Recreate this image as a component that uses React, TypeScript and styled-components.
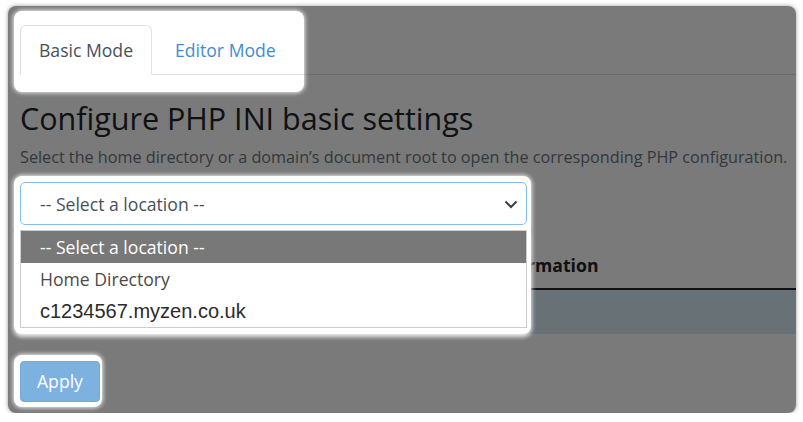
import styled, { createGlobalStyle, css } from "styled-components";

const GlobalStyle = createGlobalStyle`
  body {
    margin: 0;
    background: #fff;
    font-family: "Open Sans", "DejaVu Sans", sans-serif;
  }
  * { box-sizing: border-box; }
`;

type Pad = [number, number, number, number];

const options = [
  { label: "-- Select a location --", active: true },
  { label: "Home Directory" },
  { label: "c1234567.myzen.co.uk", arial: true },
];

export default function App() {
  return (
    <Page>
      <GlobalStyle />
      <Frame>
        <Content>
          <TabRow>
            <Spot $pad={[14, 0, 17, 6]}>
              <TabList>
                <Tab $active>Basic Mode</Tab>
                <Tab>Editor Mode</Tab>
              </TabList>
            </Spot>
            <TabFiller />
          </TabRow>

          <Title>Configure PHP INI basic settings</Title>
          <Lead>
            Select the home directory or a domain’s document root to open the corresponding PHP
            configuration.
          </Lead>

          <Spot $pad={[6, 4, 5, 6]} $radius='8px 8px 0 0'>
            <SelectBox>
              <span>-- Select a location --</span>
              <svg width='14' height='10' viewBox='0 0 14 10' fill='none'>
                <path d='M1.5 2.5 7 8l5.5-5.5' stroke='#3b3f44' strokeWidth='2' />
              </svg>
            </SelectBox>
            <Menu>
              <MenuList>
                {options.map((o) => (
                  <Option key={o.label} $active={o.active} $arial={o.arial}>
                    {o.label}
                  </Option>
                ))}
              </MenuList>
            </Menu>
          </Spot>

          <Table>
            <thead>
              <tr>
                <Th $width={462} />
                <Th>Information</Th>
              </tr>
            </thead>
            <tbody>
              <tr>
                <Td $first>&nbsp;</Td>
                <Td>&nbsp;</Td>
              </tr>
            </tbody>
          </Table>

          <ActionRow>
            <Spot $pad={[6, 2, 5, 6]}>
              <ApplyButton type='button'>Apply</ApplyButton>
            </Spot>
          </ActionRow>
        </Content>
        <Overlay />
      </Frame>
    </Page>
  );
}

/*
=========== STYLES =================
*/
const Page = styled.div`
  padding: 6px 0 0 8px;
`;

const Frame = styled.div`
  position: relative;
  width: 788px;
  height: 407px;
  overflow: hidden;
  border-radius: 8px;
  background: #fff;
  box-shadow: 0 0 4px rgba(0, 0, 0, 0.4);
`;

const Overlay = styled.div`
  position: absolute;
  inset: 0;
  z-index: 1;
  background: rgba(0, 0, 0, 0.522);
`;

const Content = styled.div`
  padding: 19px 0 0 12px;
`;

const Spot = styled.div<{ $pad: Pad; $radius?: string }>`
  position: relative;
  z-index: 2;
  background: #fff;
  border-radius: ${(p) => p.$radius ?? "8px"};
  box-shadow: 0 0 4px 1px rgba(255, 255, 255, 0.85);
  width: fit-content;
  ${({ $pad: [t, r, b, l] }) => css`
    padding: ${t}px ${r}px ${b}px ${l}px;
    margin: ${-t}px ${-r}px ${-b}px ${-l}px;
  `}
`;

const TabRow = styled.div`
  display: flex;
`;

const TabList = styled.div`
  display: flex;
  gap: 4px;
  padding-right: 9px;
  border-bottom: 1px solid #dee2e6;
`;

const TabFiller = styled.div`
  flex: 1;
  border-bottom: 1px solid #dee2e6;
`;

const Tab = styled.div<{ $active?: boolean }>`
  margin-bottom: -1px;
  padding: 11px 18px;
  font-size: 17.6px;
  line-height: 26.4px;
  border: 1px solid transparent;
  border-radius: 6px 6px 0 0;
  color: #3d8dd4;

  ${(p) =>
    p.$active &&
    css`
      color: #495057;
      background: #fff;
      border-color: #dee2e6 #dee2e6 #fff;
    `}
`;

const Title = styled.h1`
  margin: 26px 0 0;
  font-size: 30.5px;
  font-weight: 400;
  line-height: 34px;
  color: #212529;
`;

const Lead = styled.p`
  margin: 10px 0 13px;
  font-size: 16.2px;
  line-height: 24px;
  color: #6c757d;
`;

const SelectBox = styled.div`
  display: flex;
  align-items: center;
  justify-content: space-between;
  width: 507px;
  height: 43px;
  padding: 0 8px 0 19px;
  border: 1px solid #86bdf0;
  border-radius: 5px;
  background: #fff;
  font-size: 17.6px;
  color: #495057;
`;

const Menu = styled.div`
  position: absolute;
  top: 100%;
  left: 0;
  right: 0;
  padding: 0 4px 6px 6px;
  background: #fff;
  border-radius: 0 0 8px 8px;
  box-shadow: 0 2px 4px 1px rgba(255, 255, 255, 0.85);
`;

const MenuList = styled.div`
  border: 1px solid #cdcdcd;
  background: #fff;
`;

const Option = styled.div<{ $active?: boolean; $arial?: boolean }>`
  display: flex;
  align-items: center;
  height: 32px;
  padding: 0 19px;
  font-size: 17.6px;
  color: #4f4a46;

  ${(p) =>
    p.$arial &&
    css`
      font-family: "Liberation Sans", Arial, sans-serif;
      font-size: 20px;
      color: #2b2b2b;
    `}

  ${(p) =>
    p.$active &&
    css`
      background: #787878;
      color: #fff;
    `}
`;

const Table = styled.table`
  width: 100%;
  margin-top: 18px;
  border-collapse: collapse;
  font-size: 17.6px;
  line-height: 26.4px;
  color: #212529;
`;

const Th = styled.th<{ $width?: number }>`
  width: ${(p) => (p.$width ? `${p.$width}px` : "auto")};
  padding: 9px;
  text-align: left;
  font-weight: 700;
  border-bottom: 2px solid #212529;
`;

const Td = styled.td<{ $first?: boolean }>`
  padding: 9px;
  background: #d9edf7;
  border-left: ${(p) => (p.$first ? "2px solid #0f5d9a" : "none")};
`;

const ActionRow = styled.div`
  margin-top: 27px;
`;

const ApplyButton = styled.button`
  display: block;
  padding: 6px 16px;
  font-family: inherit;
  font-size: 17.6px;
  line-height: 26.4px;
  color: #fff;
  background: #7db1e0;
  border: 1px solid #72a8da;
  border-radius: 4px;
`;
